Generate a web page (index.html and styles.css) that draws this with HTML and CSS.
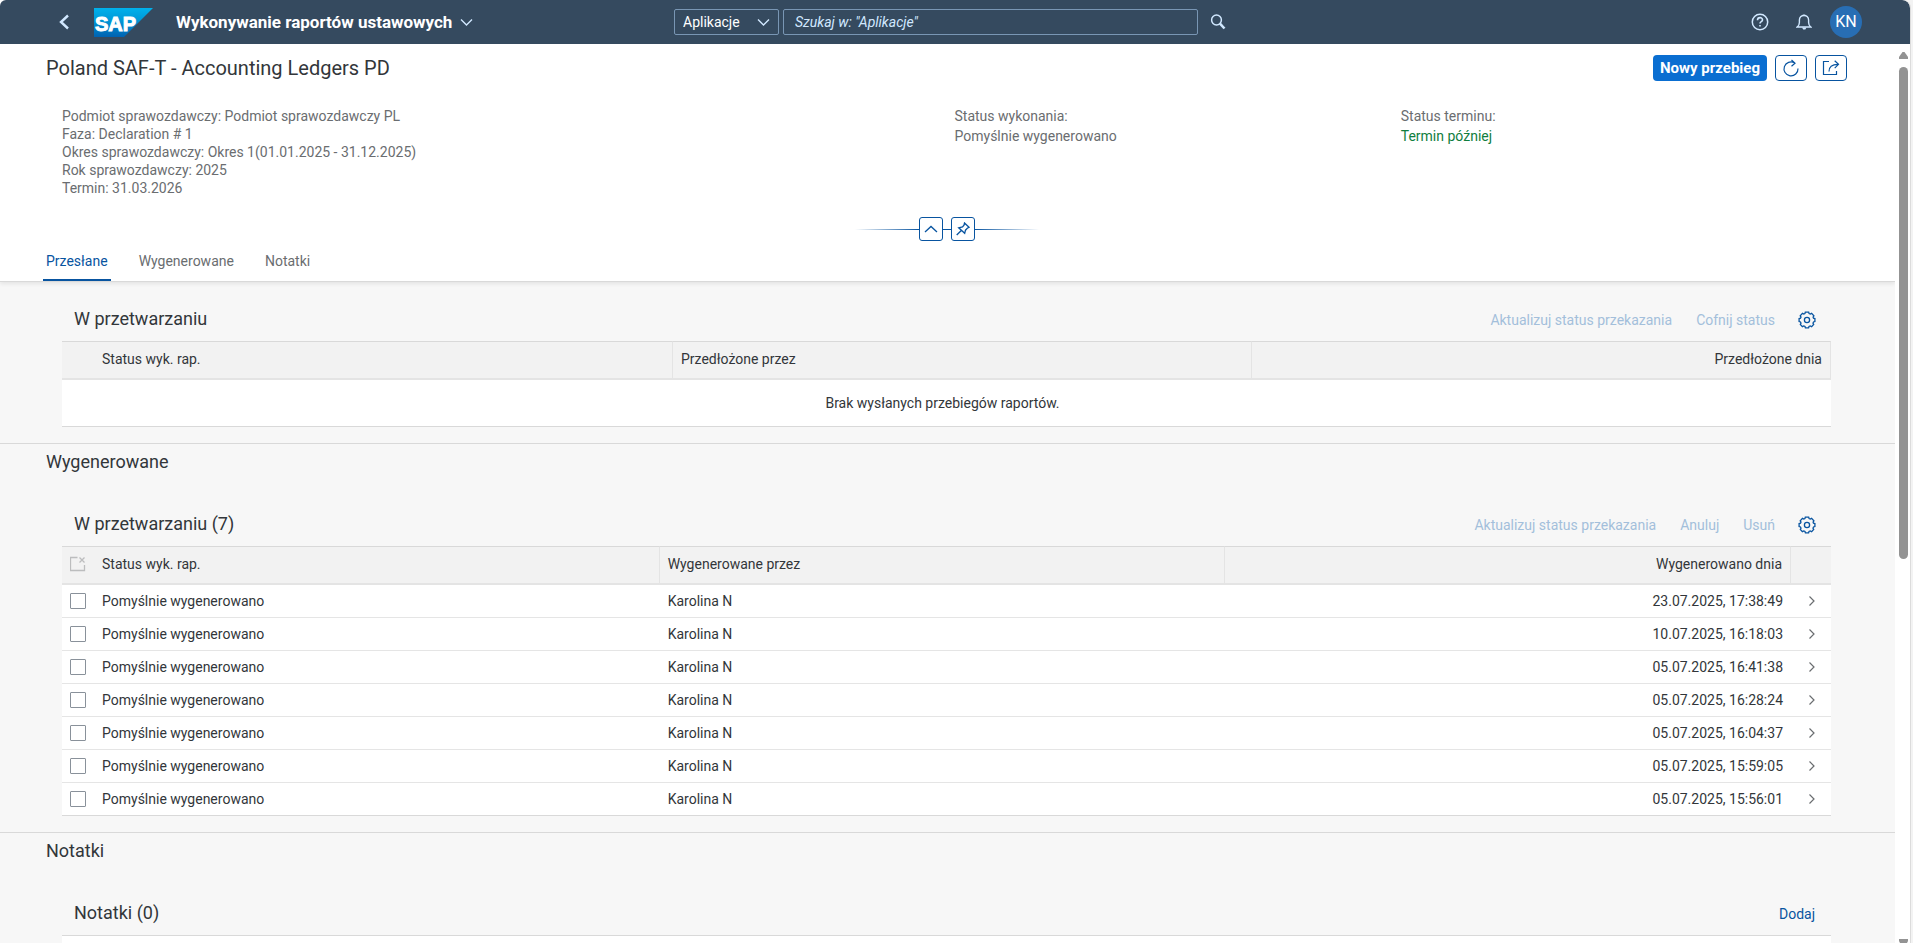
FILE: index.html
```html
<!DOCTYPE html>
<html lang="pl">
<head>
<meta charset="utf-8">
<title>Wykonywanie raportów ustawowych</title>
<meta name="viewport" content="width=device-width, initial-scale=1">
<link rel="stylesheet" href="styles.css">
</head>
<body>
<svg class="defs" width="0" height="0" aria-hidden="true">
  <symbol id="gear" viewBox="0 0 18 18"><path d="M7.3 1.2h3.4l.4 1.4 1.2.5 1.3-.7 2.3 2.4-.8 1.3.4 1.1 1.4.4v2.9l-1.4.5-.5 1.2.7 1.3-2.1 2.2-1.3-.7-1.3.5-.4 1.4H7.4L7 15.5l-1.2-.5-1.4.7-2.1-2.2.7-1.3-.5-1.2-1.4-.5V7.6l1.4-.4L3 6.100l-.8-1.300 2.300-2.400 1.300.7 1.100-.5z" stroke-width="1.300"/><circle cx="9" cy="9" r="2.600" stroke-width="1.300"/></symbol>
  <symbol id="next" viewBox="0 0 8 12"><path d="M1.500 1.500 6 6 1.500 10.500" stroke-width="1.200"/></symbol>
</svg>
<div class="app">
  <header class="shell">
    <div class="shell-start">
      <button class="icon-btn back" type="button" aria-label="Wstecz"><svg width="12" height="16" viewBox="0 0 12 16"><path d="M10 1.500 3 8l7 6.500" stroke-width="2.400"/></svg></button>
      <a class="logo" href="#" aria-label="SAP">
        <svg width="59" height="29" viewBox="0 0 59 29">
          <defs><linearGradient id="sap" x1="0" y1="0" x2="0" y2="1"><stop offset="0" stop-color="#00b1eb"/><stop offset=".4" stop-color="#009ad9"/><stop offset="1" stop-color="#0062b1"/></linearGradient></defs>
          <path d="M0 0h59L30 29H0z" fill="url(#sap)" stroke="none"/>
          <text x="1" y="23" class="logo-text">SAP</text>
        </svg>
      </a>
      <button class="shell-title" type="button">Wykonywanie raportów ustawowych <svg width="13" height="9" viewBox="0 0 13 9"><path d="m1 1.500 5.500 5.500L12 1.500" stroke-width="1.400"/></svg></button>
    </div>
    <form class="search">
      <div class="scope">
        <select aria-label="Zakres wyszukiwania"><option>Aplikacje</option></select>
        <svg class="scope-arrow" width="13" height="9" viewBox="0 0 13 9"><path d="m1 1.500 5.500 5.500L12 1.500" stroke-width="1.400"/></svg>
      </div>
      <input class="search-input" type="text" placeholder='Szukaj w: "Aplikacje"' aria-label="Szukaj">
      <button class="icon-btn find" type="button" aria-label="Szukaj"><svg width="16" height="16" viewBox="0 0 16 16"><circle cx="6.500" cy="6" r="4.900" stroke-width="1.500"/><path d="m10 9.700 4.500 4.800" stroke-width="2.500"/></svg></button>
    </form>
    <div class="shell-end">
      <button class="icon-btn" type="button" aria-label="Pomoc"><svg width="18" height="18" viewBox="0 0 18 18"><circle cx="9" cy="9" r="7.700" stroke-width="1.500"/><path d="M6.500 7.200C6.500 3.700 11.600 3.900 11.500 7c0 1.700-2.500 1.700-2.500 3.500M9 11.900v1.600" stroke-width="1.600"/></svg></button>
      <button class="icon-btn" type="button" aria-label="Powiadomienia"><svg width="16" height="18" viewBox="0 0 16 18"><path d="M1.200 14h13.600c-1.700-1.300-2.200-2.300-2.200-4.500V7C12.600 1 3.400 1 3.400 7v2.500c0 2.200-.5 3.200-2.200 4.500zM6.700 2.200h2.600" stroke-width="1.400"/><path d="M6 14.500h4.500L9.300 16.500H7.200z" fill="currentColor" stroke="none"/></svg></button>
      <button class="avatar" type="button">KN</button>
    </div>
  </header>

  <div class="viewport">
    <main class="page">
      <div class="page-header">
        <div class="title-row">
          <h1>Poland SAF-T - Accounting Ledgers PD</h1>
          <div class="actions">
            <button class="primary" type="button">Nowy przebieg</button>
            <button class="outline" type="button" aria-label="Odśwież"><svg width="18" height="18" viewBox="0 0 18 18"><path d="M12.500 3.800A7 7 0 1 0 16 9.500M9.500 1 13 4.200 9.500 7.200" stroke-width="1.200"/></svg></button>
            <button class="outline" type="button" aria-label="Udostępnij"><svg width="18" height="18" viewBox="0 0 18 18"><path d="M7 2.500H1.500v13h13V12M7 12.500C7 8 9.500 5.300 16 5.300M12.700 1.700 16.500 5.300l-3.800 3.800" stroke-width="1.200"/></svg></button>
          </div>
        </div>
        <div class="facets">
          <div class="facts">
            <p>Podmiot sprawozdawczy: Podmiot sprawozdawczy PL</p>
            <p>Faza: Declaration # 1</p>
            <p>Okres sprawozdawczy: Okres 1(01.01.2025 - 31.12.2025)</p>
            <p>Rok sprawozdawczy: 2025</p>
            <p>Termin: 31.03.2026</p>
          </div>
          <div class="status"><p>Status wykonania:</p><p>Pomyślnie wygenerowano</p></div>
          <div class="status"><p>Status terminu:</p><p class="positive">Termin później</p></div>
        </div>
        <div class="collapse">
          <span class="ray ray-left"></span>
          <button type="button" aria-label="Zwiń nagłówek"><svg width="14" height="8" viewBox="0 0 14 8"><path d="m1 7 6-5.500L13 7" stroke-width="1.300"/></svg></button>
          <span class="link-line"></span>
          <button type="button" aria-label="Przypnij nagłówek"><svg width="14" height="14" viewBox="0 0 14 14"><path d="M8.500 1 13 5.300 11.300 6.300 9.500 8.200 8.700 11.300 2.700 5.800 6.500 5 8 3.200zM5.300 8.500.7 13" stroke-width="1.300"/></svg></button>
          <span class="ray ray-right"></span>
        </div>
        <nav class="tabs">
          <a class="tab active" href="#przeslane">Przesłane</a>
          <a class="tab" href="#wygenerowane">Wygenerowane</a>
          <a class="tab" href="#notatki">Notatki</a>
        </nav>
      </div>

      <section class="section first" id="przeslane">
        <div class="block">
          <div class="toolbar">
            <h3>W przetwarzaniu</h3>
            <button type="button" disabled>Aktualizuj status przekazania</button>
            <button type="button" disabled>Cofnij status</button>
            <button class="settings" type="button" aria-label="Ustawienia"><svg width="18" height="18"><use href="#gear"/></svg></button>
          </div>
          <table>
            <colgroup><col class="col-select"><col><col><col></colgroup>
            <thead><tr><th class="joined"></th><th>Status wyk. rap.</th><th>Przedłożone przez</th><th class="num">Przedłożone dnia</th></tr></thead>
            <tbody><tr><td class="empty" colspan="4">Brak wysłanych przebiegów raportów.</td></tr></tbody>
          </table>
        </div>
      </section>

      <section class="section" id="wygenerowane">
        <h2>Wygenerowane</h2>
        <div class="block">
          <div class="toolbar">
            <h3>W przetwarzaniu (7)</h3>
            <button type="button" disabled>Aktualizuj status przekazania</button>
            <button type="button" disabled>Anuluj</button>
            <button type="button" disabled>Usuń</button>
            <button class="settings" type="button" aria-label="Ustawienia"><svg width="18" height="18"><use href="#gear"/></svg></button>
          </div>
          <table>
            <colgroup><col class="col-select"><col><col><col><col class="col-nav"></colgroup>
            <thead><tr><th class="joined"><svg class="clear" width="16" height="16" viewBox="0 0 16 16"><path d="M7.500 1.500H.5v13h14V9M9.500 1.500l5 5M14.500 1.500l-5 5" stroke-width="1.300"/></svg></th><th>Status wyk. rap.</th><th>Wygenerowane przez</th><th class="num">Wygenerowano dnia</th><th class="joined"></th></tr></thead>
            <tbody>
              <tr><td class="select"><input type="checkbox" aria-label="Wybierz wiersz 1"></td><td>Pomyślnie wygenerowano</td><td>Karolina N</td><td class="num">23.07.2025, 17:38:49</td><td class="nav"><svg width="8" height="12"><use href="#next"/></svg></td></tr>
              <tr><td class="select"><input type="checkbox" aria-label="Wybierz wiersz 2"></td><td>Pomyślnie wygenerowano</td><td>Karolina N</td><td class="num">10.07.2025, 16:18:03</td><td class="nav"><svg width="8" height="12"><use href="#next"/></svg></td></tr>
              <tr><td class="select"><input type="checkbox" aria-label="Wybierz wiersz 3"></td><td>Pomyślnie wygenerowano</td><td>Karolina N</td><td class="num">05.07.2025, 16:41:38</td><td class="nav"><svg width="8" height="12"><use href="#next"/></svg></td></tr>
              <tr><td class="select"><input type="checkbox" aria-label="Wybierz wiersz 4"></td><td>Pomyślnie wygenerowano</td><td>Karolina N</td><td class="num">05.07.2025, 16:28:24</td><td class="nav"><svg width="8" height="12"><use href="#next"/></svg></td></tr>
              <tr><td class="select"><input type="checkbox" aria-label="Wybierz wiersz 5"></td><td>Pomyślnie wygenerowano</td><td>Karolina N</td><td class="num">05.07.2025, 16:04:37</td><td class="nav"><svg width="8" height="12"><use href="#next"/></svg></td></tr>
              <tr><td class="select"><input type="checkbox" aria-label="Wybierz wiersz 6"></td><td>Pomyślnie wygenerowano</td><td>Karolina N</td><td class="num">05.07.2025, 15:59:05</td><td class="nav"><svg width="8" height="12"><use href="#next"/></svg></td></tr>
              <tr><td class="select"><input type="checkbox" aria-label="Wybierz wiersz 7"></td><td>Pomyślnie wygenerowano</td><td>Karolina N</td><td class="num">05.07.2025, 15:56:01</td><td class="nav"><svg width="8" height="12"><use href="#next"/></svg></td></tr>
            </tbody>
          </table>
        </div>
      </section>

      <section class="section" id="notatki">
        <h2>Notatki</h2>
        <div class="block">
          <div class="toolbar">
            <h3>Notatki (0)</h3>
            <button type="button">Dodaj</button>
          </div>
          <div class="notes"></div>
        </div>
      </section>
    </main>
    <div class="scrollbar" aria-hidden="true">
      <svg width="9" height="7" viewBox="0 0 9 7"><path d="M3.500 0h2L9 5v2H0V5z" fill="#939393" stroke="none"/></svg>
      <div class="track"><div class="thumb"></div></div>
      <svg width="9" height="4" viewBox="0 0 9 4"><path d="M0 0h9v2L8 4H1L0 2z" fill="#939393" stroke="none"/></svg>
    </div>
  </div>
</div>
</body>
</html>
```

FILE: styles.css
```css
* { box-sizing: border-box; }
body {
  margin: 0;
  background: #f3f3f3;
  color: #32363a;
  font: 14px/18px Roboto, "Noto Sans", sans-serif;
}
h1, h2, h3, p { margin: 0; font-weight: 400; }
button, input, select { font: inherit; color: inherit; margin: 0; }
button { background: none; border: 0; padding: 0; cursor: pointer; }
svg { display: block; fill: none; stroke: currentColor; }
.defs { position: absolute; }

.app {
  display: flex;
  flex-direction: column;
  height: 100vh;
  margin-right: 2px;
  border-right: 1px solid #dcdcdc;
  border-radius: 0 8px 0 0;
  overflow: hidden;
  background: #fff;
}

/* Shell bar */
.shell {
  display: grid;
  grid-template-columns: 1fr auto 1fr;
  align-items: center;
  flex: none;
  height: 44px;
  background: #354a5f;
  color: #d1e8ff;
  border-radius: 6px 8px 0 0;
}
.shell-start { display: flex; align-items: center; padding-left: 46px; }
.icon-btn { display: grid; place-items: center; width: 36px; height: 36px; }
.logo { margin-left: 12px; }
.logo-text {
  font: 700 20px "Liberation Sans", sans-serif;
  fill: #fff;
  stroke: #fff;
  stroke-width: 1px;
}
.shell-title {
  display: flex;
  align-items: center;
  gap: 8px;
  margin-left: 23px;
  color: #fff;
  font-size: 17px;
  font-weight: 700;
  white-space: nowrap;
}
.shell-title svg { color: #d1e8ff; }
.search { display: flex; align-items: center; }
.scope { position: relative; width: 105px; margin-right: 4px; }
.scope select {
  display: block;
  width: 100%;
  height: 26px;
  padding: 0 8px;
  appearance: none;
  border: 1px solid #7996b4;
  border-radius: 2px;
  background: #354a5f;
  color: #fff;
}
.scope-arrow { position: absolute; right: 9px; top: 9px; pointer-events: none; }
.search-input {
  width: 415px;
  height: 26px;
  padding: 0 11px;
  border: 1px solid #7996b4;
  border-radius: 2px;
  background: transparent;
}
.search-input::placeholder { color: #d1e8ff; font-style: italic; opacity: 1; }
.find { width: 38px; padding-left: 2px; }
.shell-end {
  display: flex;
  align-items: center;
  justify-content: flex-end;
  gap: 8px;
  padding-right: 48px;
}
.avatar {
  width: 32px;
  height: 32px;
  border-radius: 50%;
  background: #286eb4;
  color: #fff;
  font-size: 16px;
}

/* Page frame */
.viewport { display: flex; flex: 1; min-height: 0; }
.page { flex: 1; min-width: 0; overflow: hidden; background: #f7f7f7; }
.scrollbar {
  display: flex;
  flex-direction: column;
  align-items: center;
  width: 15px;
  padding: 8px 2px 0 3px;
  align-self: stretch;
}
.track { flex: 1; width: 9px; padding: 8px 0; }
.thumb { height: 57%; border-radius: 5px; background: #939393; }

/* Object header */
.page-header {
  position: relative;
  background: #fff;
  border-bottom: 1px solid #d9d9d9;
  box-shadow: 0 2px 4px rgba(0, 0, 0, .08);
}
.title-row {
  display: flex;
  justify-content: space-between;
  align-items: center;
  height: 48px;
  padding: 0 48px 0 46px;
}
.title-row h1 { font-size: 20px; line-height: 26px; }
.actions { display: flex; gap: 8px; }
.actions button { height: 26px; border-radius: 4px; }
.primary { width: 114px; background: #0a6ed1; color: #fff; font-size: 15px; font-weight: 700; }
.outline {
  display: grid;
  place-items: center;
  width: 32px;
  border: 1px solid #0854a0;
  color: #0854a0;
}
.facets {
  display: grid;
  grid-template-columns: 2fr 1fr 1fr;
  padding: 15px 48px 20px 62px;
  color: #6a6d70;
}
.status p + p { margin-top: 2px; }
.status .positive { color: #107e3e; }
.collapse {
  display: flex;
  justify-content: center;
  align-items: center;
  padding-right: 2px;
  color: #0854a0;
}
.collapse button {
  display: grid;
  place-items: center;
  width: 24px;
  height: 24px;
  border: 1px solid #0854a0;
  border-radius: 3px;
}
.link-line { width: 8px; height: 1px; background: #0854a0; }
.ray { width: 64px; height: 1px; }
.ray-left { background: linear-gradient(to right, transparent, #0854a0); }
.ray-right { background: linear-gradient(to left, transparent, #0854a0); }
.tabs { display: flex; gap: 25px; height: 40px; padding-left: 43px; }
.tab {
  padding: 11px 3px 0;
  color: #6a6d70;
  text-decoration: none;
}
.tab.active { color: #0854a0; border-bottom: 2px solid #0854a0; }

/* Sections */
.section { border-top: 1px solid #d9d9d9; }
.section.first { border-top: 0; padding-top: 11px; }
.section h2 { padding: 0 46px; font-size: 18px; line-height: 36px; }
.section h2 + .block { margin-top: 18px; }
.block { margin: 0 64px 16px 62px; }
.toolbar { display: flex; align-items: center; gap: 8px; height: 48px; padding: 6px 8px 0 12px; }
.toolbar h3 { flex: 1; padding-bottom: 2px; font-size: 18px; line-height: 24px; }
.toolbar button { height: 26px; padding: 0 8px; color: #0854a0; }
.toolbar button:disabled { color: #a3bfdb; cursor: default; }
.toolbar .settings { width: 32px; padding: 0 7px; }

table {
  width: 100%;
  table-layout: fixed;
  border-collapse: separate;
  border-spacing: 0;
  background: #fff;
}
.col-select { width: 32px; }
.col-nav { width: 40px; }
th {
  height: 39px;
  padding: 0 8px 2px;
  border-top: 1px solid #d9d9d9;
  border-bottom: 2px solid #e4e4e4;
  border-right: 1px solid #e4e4e4;
  background: #f2f2f2;
  font-weight: 400;
  text-align: left;
}
th.joined { border-right: 0; }
td { height: 33px; padding: 0 8px 1px; border-bottom: 1px solid #e5e5e5; }
tbody tr:last-child td { border-bottom-color: #d9d9d9; }
.num { text-align: right; }
td.empty { height: 47px; padding-right: 16px; text-align: center; }
td.select { padding: 0 8px; }
.clear { color: #bcbdbe; }
.select input {
  display: block;
  width: 16px;
  height: 16px;
  appearance: none;
  border: 1px solid #89919a;
  border-radius: 1px;
  background: #fff;
}
.nav { color: #6a6d70; }
.nav svg { margin-left: 9px; }
.notes { height: 48px; border-top: 1px solid #d9d9d9; background: #fff; }
```
